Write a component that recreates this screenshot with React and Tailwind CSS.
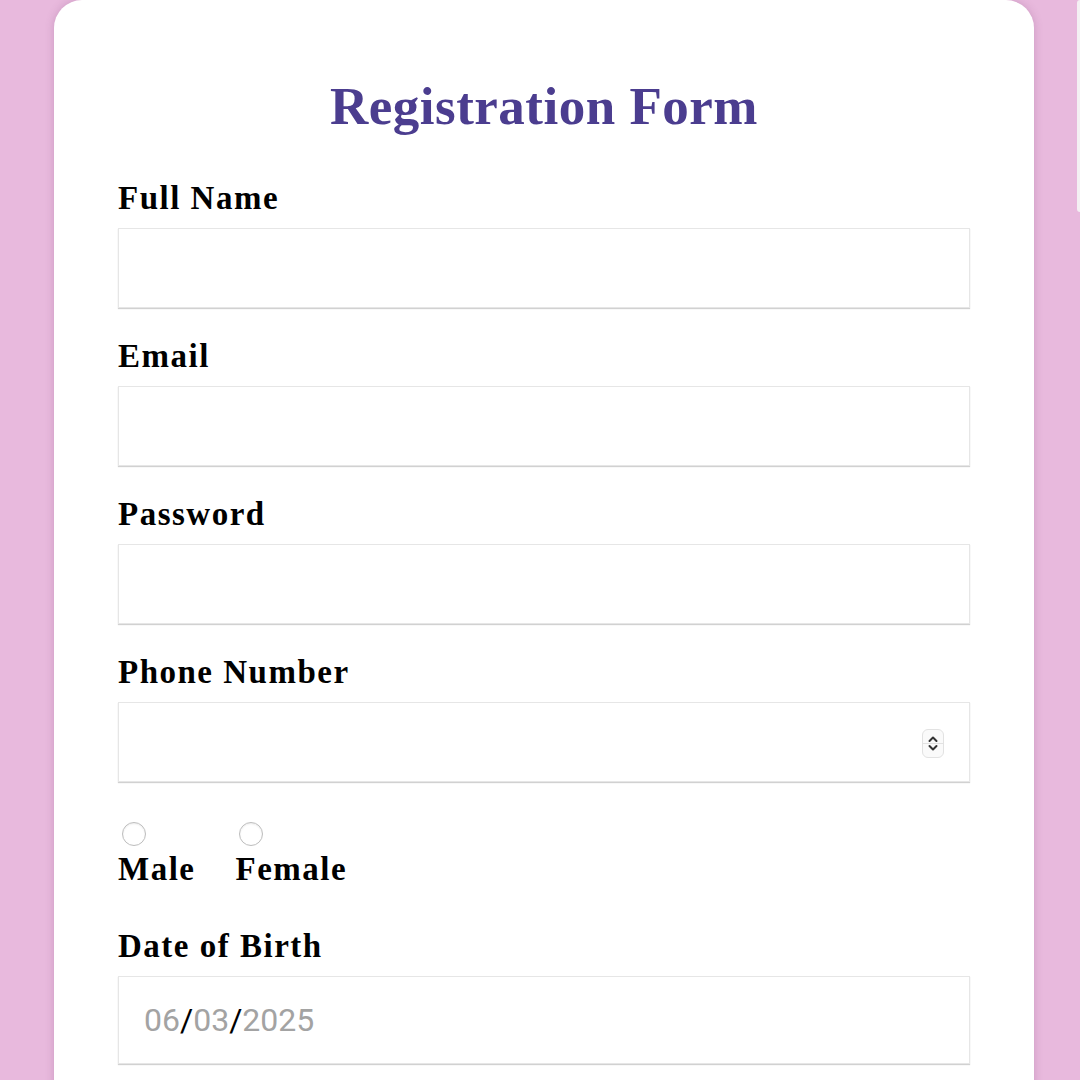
import React from "react";

const serif = { fontFamily: '"Liberation Serif", "DejaVu Serif", serif' };

function Field({ label, children }) {
  return (
    <div className="flex flex-col">
      <label className="text-[33px] leading-[36px] tracking-[1.5px] font-bold text-black h-[36px]">{label}</label>
      <div className="mt-[12px]">{children}</div>
    </div>
  );
}

function Box({ children, h = "h-[80px]" }) {
  return (
    <div className={`relative w-full ${h} bg-white border border-[#e6e6e6] shadow-[0_1px_1px_rgba(0,0,0,0.18)] flex items-center`}>
      {children}
    </div>
  );
}

function Radio() {
  return <span className="block w-[24px] h-[24px] rounded-full border border-[#bdbdbd] bg-white ml-[4px] shadow-[inset_0_1px_2px_rgba(0,0,0,0.08)]" />;
}

export default function App() {
  return (
    <div className="w-[1080px] h-[1080px] bg-[#e8b9dd] overflow-hidden relative" style={serif}>
      <div className="absolute right-0 top-0 w-[3px] h-[212px] bg-[#f4f0f3] rounded-l" />
      <div className="ml-[54px] w-[980px] h-[1120px] bg-white rounded-t-[28px] shadow-[0_0_8px_rgba(120,60,110,0.25)] px-[64px] pt-[76px]">
        <h1 className="text-center text-[53px] leading-[60px] tracking-[0.5px] font-bold text-[#4b3d8f]">Registration Form</h1>
        <div className="mt-[44px] flex flex-col gap-[30px]">
          <Field label="Full Name"><Box /></Field>
          <Field label="Email"><Box /></Field>
          <Field label="Password"><Box /></Field>
          <Field label="Phone Number">
            <Box>
              <div className="absolute right-[25px] top-[26px] w-[22px] h-[29px] rounded-[6px] border border-[#e2e2e2] bg-[#fafafa] flex flex-col items-center justify-center">
                <svg width="12" height="8" viewBox="0 0 12 8"><path d="M2.5 6 L6 2.5 L9.5 6" fill="none" stroke="#333" strokeWidth="2" strokeLinecap="round" strokeLinejoin="round" /></svg>
                <div className="w-full h-px bg-[#e2e2e2]" />
                <svg width="12" height="8" viewBox="0 0 12 8"><path d="M2.5 2 L6 5.5 L9.5 2" fill="none" stroke="#333" strokeWidth="2" strokeLinecap="round" strokeLinejoin="round" /></svg>
              </div>
            </Box>
          </Field>
          <div className="flex gap-[40px] mt-[10px]">
            <div className="flex flex-col">
              <Radio />
              <span className="text-[33px] leading-[36px] tracking-[1.5px] font-bold mt-[5px]">Male</span>
            </div>
            <div className="flex flex-col">
              <Radio />
              <span className="text-[33px] leading-[36px] tracking-[1.5px] font-bold mt-[5px]">Female</span>
            </div>
          </div>
          <div className="mt-[11px]">
            <Field label="Date of Birth">
              <Box h="h-[88px]">
                <span className="pl-[25px] text-[32px] text-[#a3a3a3]" style={{ fontFamily: 'Roboto, "Liberation Sans", sans-serif' }}>
                  06<span className="text-black">/</span>03<span className="text-black">/</span>2025
                </span>
              </Box>
            </Field>
          </div>
        </div>
      </div>
    </div>
  );
}
